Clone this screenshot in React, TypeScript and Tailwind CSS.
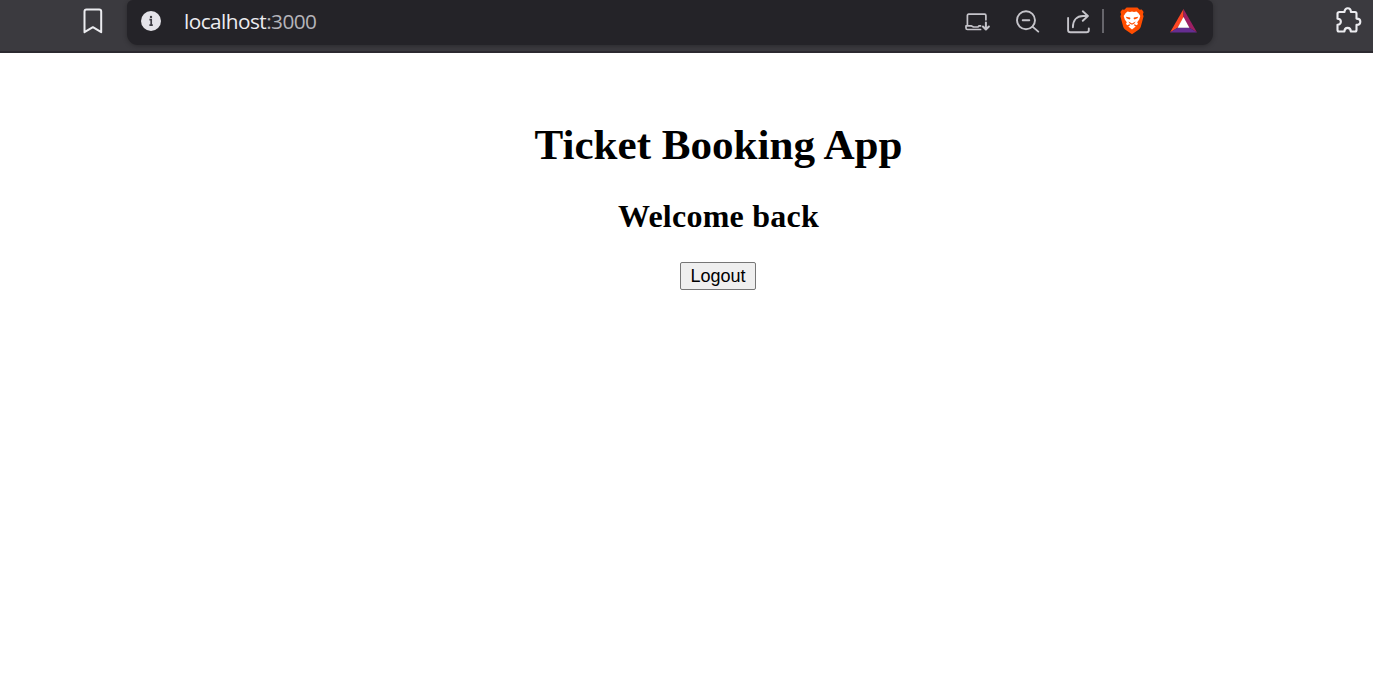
import type { ReactNode } from "react";

function BookmarkIcon() {
  return (
    <svg width="20" height="26" viewBox="0 0 20 26" fill="none" stroke="#ececf0" strokeWidth="2" strokeLinejoin="round">
      <path d="M1.5 3.4Q1.5 1.4 3.5 1.4H16.2Q18.2 1.4 18.2 3.4V24.2L9.9 19.2L1.5 24.2Z" />
    </svg>
  );
}

function InfoIcon() {
  return (
    <svg width="20" height="20" viewBox="0 0 20 20">
      <circle cx="10" cy="10" r="10" fill="#e4e3e9" />
      <path d="M8.4 8.7H10.2V14.2M8.4 14.2H11.8" fill="none" stroke="#3c3b42" strokeWidth="1.7" />
      <circle cx="10" cy="5.9" r="1.2" fill="#3c3b42" />
    </svg>
  );
}

function InstallIcon() {
  return (
    <svg width="26" height="18" viewBox="0 0 26 18" fill="none" stroke="#c5c4ca" strokeWidth="1.7" strokeLinecap="round" strokeLinejoin="round">
      <path d="M2.4 12V2.5Q2.4 1.2 3.7 1.2H19.6Q20.9 1.2 20.9 2.5V6.8" />
      <path d="M15.6 16.5H2.5Q1 16.5 1 15V12.9H6.5L8.5 14H13L14 12.9H15.6" />
      <path d="M20.9 9.5V16.2M17.9 13.5L20.9 16.5L23.9 13.5" strokeWidth="2" />
    </svg>
  );
}

function ZoomOutIcon() {
  return (
    <svg width="24" height="24" viewBox="0 0 24 24" fill="none" stroke="#c5c4ca" strokeWidth="1.9" strokeLinecap="round">
      <circle cx="10" cy="10.2" r="9" />
      <path d="M6.7 10.2H13.3M16.5 16.6L22.3 21.6" />
    </svg>
  );
}

function ShareIcon() {
  return (
    <svg width="24" height="24" viewBox="0 0 24 24" fill="none" stroke="#c5c4ca" strokeWidth="1.9" strokeLinecap="round" strokeLinejoin="round">
      <path d="M1.1 8V20.2Q1.1 22.3 3.4 22.3H19.6Q21.8 22.3 21.8 20.2V18.5" />
      <path d="M5.9 17.3C5.9 10.5 9.6 6 16.1 6H20.6M15.8 1.3L20.9 6L15.8 10.8" />
    </svg>
  );
}

function BraveIcon() {
  return (
    <svg width="24" height="28" viewBox="0 0 24 28">
      <path d="M6.6 0.4H17.4L19.7 2.8L21.8 2.6L23.6 5L22.9 7.3L23.6 9.2L20.8 19.7Q20.3 21.4 18.9 22.4L12 27.3L5.1 22.4Q3.7 21.4 3.2 19.7L0.4 9.2L1.1 7.3L0.4 5L2.2 2.6L4.3 2.8Z" fill="#ff4d00" />
      <path d="M7.5 4.6L10 5L12 4.6L14 5L16.5 4.6L18.5 6.3L20.3 9L19.2 12.4L17.2 15.2L18 17L16.6 18.2L14.6 17.2L13.6 18.1L15.7 19.5L12 22.6L8.3 19.5L10.4 18.1L9.4 17.2L7.4 18.2L6 17L6.8 15.2L4.8 12.4L3.7 9L5.5 6.3Z" fill="#fff" />
      <path d="M5.8 9.7L10.1 10.6L10.4 11.7L9.4 12.4L6.6 11.3ZM18.2 9.7L13.9 10.6L13.6 11.7L14.6 12.4L17.4 11.3ZM8.3 14.4L10.2 15.4L12 16.5L13.8 15.4L15.7 14.4L14.3 16.5L12 17.8L9.7 16.5Z" fill="#ff4d00" />
    </svg>
  );
}

function RewardsIcon() {
  return (
    <svg width="27" height="24" viewBox="0 0 27 24">
      <path d="M13.5 0L0 23.5L7.9 18.6L13.5 8.7Z" fill="#ff4724" />
      <path d="M13.5 0V8.7L19.1 18.6L27 23.5Z" fill="#9e1f63" />
      <path d="M0 23.5H27L19.1 18.6H7.9Z" fill="#662d91" />
      <path d="M13.5 8L7.6 18.8H19.4Z" fill="#fff" />
    </svg>
  );
}

function ExtensionsIcon() {
  return (
    <svg width="28" height="28" viewBox="0 0 28 28" fill="none" stroke="#ececf0" strokeWidth="2.1" strokeLinejoin="round">
      <path d="M4.5 6H9.5C9.5 1 15.9 1 15.9 6H20Q21.5 6 21.5 7.5V12.6C26.6 12.6 26.6 18.9 21.5 18.9V24Q21.5 25.5 20 25.5H15.8C15.8 20.6 9.4 20.6 9.4 25.5H4Q2.5 25.5 2.5 24V18.7C7 18.7 7 12.8 2.5 12.8V7.5Q2.5 6 4.5 6Z" />
    </svg>
  );
}

function ToolButton({ label, className, children }: { label: string; className: string; children: ReactNode }) {
  return (
    <button aria-label={label} className={`flex shrink-0 ${className}`}>
      {children}
    </button>
  );
}

export default function App() {
  return (
    <div className="flex h-[697px] w-[1373px] flex-col overflow-hidden bg-white">
      <header className="flex h-[53px] shrink-0 items-start overflow-hidden border-b-2 border-[#2c2a30] bg-[#3b3a3f]">
        <ToolButton label="Bookmark" className="ml-[83px] mt-2">
          <BookmarkIcon />
        </ToolButton>
        <div className="ml-6 flex h-[45px] w-[1086px] shrink-0 items-start rounded-b-[11px] rounded-t-[6px] bg-[#242328] pl-[14px] shadow-[0_1px_5px_rgba(0,0,0,0.3)]">
          <ToolButton label="Site information" className="mt-[11px]">
            <InfoIcon />
          </ToolButton>
          <div className="ml-[23px] mt-[7px] whitespace-nowrap font-['Open_Sans',sans-serif] text-[20.8px] leading-7 tracking-[-0.55px] text-[#ececf0]">
            localhost<span className="text-[#b5b4ba]">:3000</span>
          </div>
          <div className="ml-auto mr-4 flex items-start">
            <ToolButton label="Install" className="mt-[13px]">
              <InstallIcon />
            </ToolButton>
            <ToolButton label="Zoom" className="ml-[25px] mt-[10px]">
              <ZoomOutIcon />
            </ToolButton>
            <ToolButton label="Share" className="ml-[27px] mt-[10px]">
              <ShareIcon />
            </ToolButton>
            <div className="ml-[11px] mt-[9px] h-6 w-[2px] bg-[#66656b]" />
            <ToolButton label="Shields" className="ml-4 mt-[7px]">
              <BraveIcon />
            </ToolButton>
            <ToolButton label="Rewards" className="ml-[26px] mt-[9px]">
              <RewardsIcon />
            </ToolButton>
          </div>
        </div>
        <ToolButton label="Extensions" className="ml-[122px] mt-[6px]">
          <ExtensionsIcon />
        </ToolButton>
      </header>
      <main className="flex flex-1 flex-col items-center pl-[64px] pt-[67px] font-['Liberation_Serif',serif] text-black">
        <h1 className="whitespace-nowrap text-[43.1px] font-bold leading-[50px]">Ticket Booking App</h1>
        <h2 className="mt-[27px] whitespace-nowrap text-[32px] font-bold leading-[38px] tracking-[0.25px]">Welcome back</h2>
        <button className="mr-px mt-[27px] flex h-7 w-[76px] items-center justify-center rounded-[2px] border border-[#767676] bg-[#efefef] font-['Liberation_Sans',sans-serif] text-[18px] leading-5">
          Logout
        </button>
      </main>
    </div>
  );
}
